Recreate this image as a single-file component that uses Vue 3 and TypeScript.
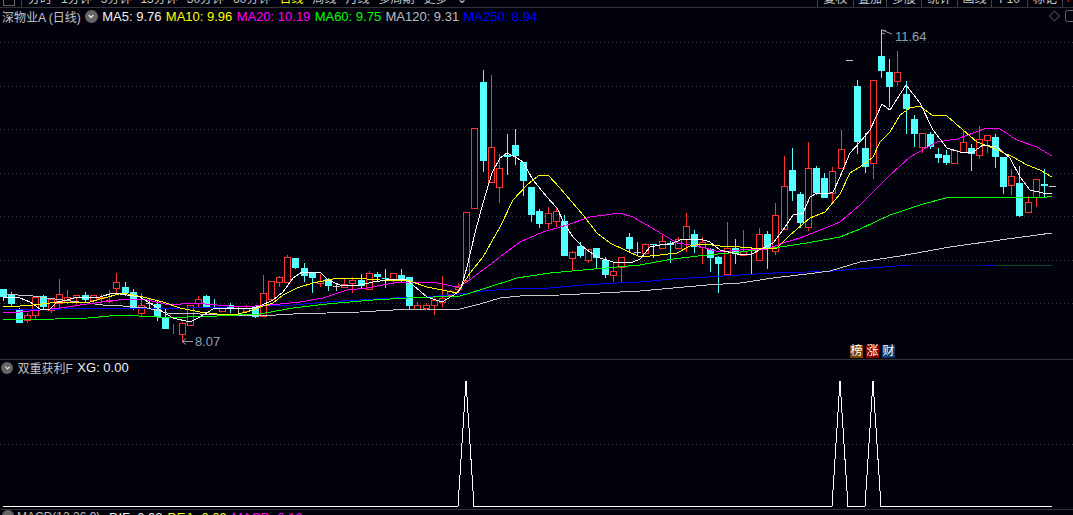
<script setup lang="ts">
type Kind = 'r' | 'c' | 'w'
type Raw = [number, number, number, number, number, Kind]

// x, high, body top, body bottom, low, kind
const raw: Raw[] = [
  [3, 289, 289, 297, 301, 'c'], [11, 292, 294, 304, 307, 'c'], [19, 308, 309, 323, 323, 'c'], [27, 313, 315, 320, 323, 'r'],
  [35, 297, 297, 315, 319, 'r'], [43, 295, 296, 307, 309, 'c'], [51, 299, 299, 310, 313, 'r'], [59, 279, 294, 303, 308, 'r'],
  [67, 290, 297, 302, 304, 'r'], [76, 295, 295, 297, 305, 'r'], [85, 292, 295, 300, 303, 'c'], [93, 295, 295, 300, 303, 'r'],
  [101, 294, 297, 298, 302, 'r'], [109, 290, 300, 301, 303, 'r'], [116, 273, 282, 288, 294, 'r'], [125, 282, 287, 293, 296, 'c'],
  [133, 289, 292, 308, 310, 'c'], [141, 293, 305, 313, 316, 'r'], [149, 299, 303, 303, 307, 'w'], [157, 300, 304, 317, 321, 'c'],
  [165, 309, 317, 329, 329, 'c'], [173, 324, 329, 329, 334, 'r'], [182, 322, 323, 334, 342, 'r'], [190, 305, 305, 325, 325, 'r'],
  [198, 296, 299, 303, 307, 'r'], [206, 295, 296, 307, 307, 'c'], [214, 299, 307, 308, 309, 'c'], [222, 307, 308, 311, 312, 'r'],
  [230, 303, 305, 309, 313, 'c'], [238, 306, 308, 308, 315, 'w'], [246, 305, 308, 311, 312, 'r'], [255, 306, 307, 317, 318, 'c'],
  [263, 275, 293, 316, 316, 'r'], [271, 281, 281, 299, 299, 'r'], [279, 276, 277, 282, 287, 'r'], [287, 255, 257, 282, 282, 'r'],
  [295, 258, 258, 268, 269, 'c'], [304, 263, 268, 276, 282, 'c'], [312, 272, 273, 278, 293, 'c'], [320, 274, 281, 283, 287, 'r'],
  [328, 278, 279, 286, 291, 'c'], [336, 283, 286, 286, 290, 'w'], [344, 279, 284, 287, 288, 'r'], [352, 277, 280, 283, 293, 'r'],
  [361, 274, 280, 286, 289, 'c'], [369, 271, 273, 289, 289, 'r'], [377, 272, 274, 277, 282, 'c'], [385, 269, 278, 279, 288, 'c'],
  [393, 273, 273, 279, 284, 'r'], [401, 269, 275, 279, 283, 'c'], [409, 277, 277, 306, 309, 'c'], [417, 302, 305, 309, 310, 'r'],
  [426, 303, 305, 308, 309, 'r'], [434, 296, 300, 305, 315, 'r'], [442, 276, 298, 302, 307, 'r'], [450, 290, 291, 295, 295, 'r'],
  [458, 283, 287, 289, 293, 'r'], [466, 212, 212, 280, 283, 'r'], [474, 128, 128, 208, 208, 'r'], [483, 70, 82, 161, 172, 'c'],
  [491, 75, 147, 182, 182, 'r'], [499, 154, 168, 187, 203, 'r'], [507, 134, 155, 157, 175, 'c'], [515, 129, 145, 156, 165, 'c'],
  [523, 162, 162, 181, 196, 'c'], [531, 187, 187, 215, 222, 'c'], [539, 209, 211, 224, 228, 'c'], [548, 207, 213, 223, 229, 'r'],
  [556, 207, 211, 221, 227, 'r'], [564, 215, 221, 256, 256, 'c'], [572, 251, 252, 258, 270, 'r'], [580, 242, 246, 256, 258, 'c'],
  [588, 249, 249, 260, 263, 'r'], [596, 248, 248, 258, 268, 'c'], [605, 257, 260, 275, 278, 'c'], [613, 262, 271, 275, 282, 'r'],
  [621, 257, 257, 267, 282, 'r'], [629, 233, 237, 249, 253, 'c'], [637, 242, 252, 252, 254, 'w'], [645, 243, 244, 253, 255, 'r'],
  [653, 244, 244, 245, 258, 'c'], [662, 234, 241, 248, 249, 'r'], [670, 241, 243, 245, 263, 'c'], [678, 237, 239, 248, 248, 'r'],
  [686, 213, 226, 239, 252, 'r'], [694, 230, 234, 247, 253, 'c'], [702, 237, 242, 247, 264, 'r'], [710, 248, 249, 258, 272, 'c'],
  [718, 256, 257, 264, 293, 'c'], [727, 222, 248, 274, 274, 'r'], [735, 239, 248, 254, 264, 'c'], [743, 230, 251, 255, 256, 'r'],
  [751, 248, 249, 250, 274, 'c'], [759, 228, 234, 260, 260, 'r'], [767, 231, 234, 249, 269, 'c'], [775, 203, 215, 251, 255, 'r'],
  [784, 156, 186, 229, 229, 'r'], [792, 148, 170, 191, 201, 'c'], [800, 192, 194, 223, 228, 'c'], [808, 142, 168, 227, 231, 'r'],
  [816, 166, 168, 193, 195, 'c'], [824, 173, 178, 198, 198, 'c'], [832, 167, 171, 193, 202, 'r'], [841, 130, 149, 168, 168, 'r'],
  [849, 60, 60, 60, 60, 'w'], [857, 80, 86, 142, 154, 'c'], [865, 133, 148, 167, 173, 'c'], [873, 80, 80, 163, 179, 'r'],
  [881, 30, 56, 71, 78, 'c'], [889, 59, 72, 87, 107, 'c'], [897, 51, 72, 81, 86, 'r'], [906, 81, 94, 109, 134, 'c'],
  [914, 115, 119, 134, 147, 'c'], [922, 133, 133, 147, 153, 'r'], [930, 132, 134, 147, 149, 'c'], [938, 148, 154, 158, 163, 'c'],
  [946, 150, 155, 163, 165, 'c'], [954, 150, 150, 163, 164, 'r'], [963, 130, 142, 152, 152, 'r'], [971, 144, 148, 154, 171, 'c'],
  [979, 126, 139, 155, 159, 'r'], [987, 135, 135, 140, 153, 'r'], [995, 134, 137, 157, 168, 'c'], [1003, 157, 157, 187, 194, 'c'],
  [1011, 169, 176, 185, 195, 'r'], [1019, 166, 183, 216, 217, 'c'], [1028, 196, 202, 212, 212, 'r'], [1036, 179, 179, 197, 207, 'r'],
  [1044, 169, 184, 186, 197, 'c'], [1052, 186, 186, 186, 186, 'w']
]

const candles = raw.map(([x, high, top, bottom, low, kind]) => ({ x, high, top, bottom, low, kind }))

const toPoints = (p: number[][]): string => p.map((q) => q.join(',')).join(' ')

const maLines = [
  { color: '#0000ff', pts: [[3, 310], [63, 309], [190, 308], [260, 306], [293, 305], [327, 302], [360, 300], [393, 298], [427, 297], [470, 293], [483, 291], [510, 289], [550, 288], [583, 285], [617, 283], [640, 282], [673, 279], [707, 277], [740, 275], [773, 273], [807, 272], [833, 271], [870, 268], [910, 265]] },
  { color: '#0a0a66', pts: [[910, 265], [985, 265]] },
  { color: '#0000ff', pts: [[985, 265], [996, 265]] },
  { color: '#0b4a2a', pts: [[996, 265], [1052, 265]] },
  { color: '#c8c8c8', pts: [[3, 294], [33, 296], [47, 298], [103, 305], [123, 306], [147, 308], [167, 313], [178, 313], [200, 314], [260, 316], [293, 314], [327, 313], [360, 312], [393, 310], [427, 309], [460, 309], [480, 304], [500, 298], [520, 296], [560, 295], [600, 293], [640, 291], [673, 288], [707, 285], [740, 283], [773, 278], [807, 274], [830, 271], [860, 262], [900, 256], [950, 247], [1000, 240], [1052, 233]] },
  { color: '#00ff00', pts: [[3, 320], [55, 319], [88, 318], [120, 315], [157, 317], [187, 317], [217, 316], [260, 314], [293, 308], [327, 304], [373, 300], [407, 298], [460, 296], [470, 293], [483, 289], [517, 278], [550, 273], [583, 270], [617, 267], [640, 265], [673, 259], [707, 255], [740, 252], [773, 248], [807, 243], [840, 237], [860, 229], [890, 215], [923, 204], [950, 197], [967, 197], [1047, 197], [1052, 196]] },
  { color: '#ff00ff', pts: [[3, 313], [20, 312], [40, 310], [60, 308], [87, 304], [110, 301], [127, 299], [147, 300], [170, 305], [193, 303], [217, 305], [240, 307], [270, 305], [300, 302], [323, 298], [347, 290], [367, 288], [393, 283], [420, 282], [437, 283], [457, 287], [467, 282], [483, 270], [500, 257], [520, 242], [543, 232], [567, 225], [590, 217], [620, 213], [633, 217], [657, 231], [677, 243], [697, 246], [720, 252], [740, 250], [767, 249], [783, 243], [800, 238], [823, 229], [840, 222], [860, 205], [873, 192], [890, 175], [910, 157], [937, 142], [957, 139], [987, 128], [1000, 129], [1017, 140], [1037, 147], [1052, 156]] },
  { color: '#ffff00', pts: [[3, 306], [20, 306], [33, 305], [50, 303], [67, 302], [87, 303], [100, 299], [123, 293], [143, 297], [163, 302], [180, 308], [200, 312], [217, 314], [233, 315], [247, 312], [260, 307], [273, 303], [283, 295], [297, 288], [313, 283], [333, 279], [350, 278], [367, 279], [393, 281], [407, 280], [427, 287], [442, 290], [457, 293], [461, 287], [470, 273], [483, 257], [500, 227], [513, 200], [527, 185], [538, 176], [548, 175], [560, 188], [583, 215], [597, 233], [610, 243], [627, 251], [640, 257], [660, 255], [677, 253], [690, 246], [703, 244], [720, 246], [740, 247], [763, 249], [777, 248], [790, 235], [810, 218], [825, 212], [840, 194], [850, 173], [863, 165], [873, 157], [880, 142], [890, 132], [900, 115], [910, 108], [920, 106], [932, 115], [947, 116], [963, 130], [977, 142], [993, 148], [1013, 157], [1027, 165], [1040, 170], [1052, 177]] },
  { color: '#ffffff', pts: [[3, 298], [12, 297], [20, 298], [30, 302], [40, 309], [50, 309], [57, 302], [67, 300], [77, 297], [100, 297], [113, 293], [127, 295], [140, 297], [153, 305], [163, 312], [173, 318], [190, 322], [200, 317], [213, 309], [233, 308], [253, 308], [260, 306], [273, 300], [283, 292], [293, 278], [302, 272], [320, 272], [328, 280], [340, 285], [360, 285], [373, 282], [393, 279], [407, 280], [427, 297], [442, 302], [457, 293], [461, 288], [467, 267], [475, 233], [483, 203], [492, 173], [500, 158], [507, 153], [517, 158], [523, 162], [533, 180], [547, 197], [557, 208], [565, 225], [573, 237], [583, 247], [597, 257], [613, 262], [633, 262], [640, 259], [650, 247], [660, 245], [670, 244], [683, 239], [700, 239], [710, 242], [720, 250], [737, 254], [750, 255], [763, 248], [773, 243], [783, 230], [793, 215], [803, 213], [810, 197], [817, 193], [830, 193], [833, 192], [840, 177], [850, 153], [860, 142], [870, 130], [882, 104], [890, 110], [906, 85], [920, 103], [933, 130], [947, 148], [960, 152], [973, 152], [983, 145], [997, 147], [1010, 158], [1020, 177], [1030, 190], [1043, 193], [1052, 194]] }
].map((l) => ({ color: l.color, points: toPoints(l.pts) }))

const gridY = [42, 86, 129, 173, 216, 260, 303]

const spikes = [466, 840, 873]
const signal = ((): string => {
  const p: number[][] = [[3, 506]]
  for (const s of spikes) p.push([s - 8, 506], [s, 381], [s + 8, 506])
  p.push([1052, 506])
  return toPoints(p)
})()

const leftTabs = ['分时', '1分钟', '5分钟', '15分钟', '30分钟', '60分钟', '日线', '周线', '月线', '多周期', '更多']
const rightTabs = [
  { label: '复权', w: 36 }, { label: '叠加', w: 33 }, { label: '多股', w: 35 }, { label: '统计', w: 36 },
  { label: '画线', w: 34 }, { label: 'F10', w: 36 }, { label: '标记', w: 35 }, { label: '+', w: 11 }
]
const legend = [
  { t: 'MA5: 9.76', c: 'white' }, { t: 'MA10: 9.96', c: 'yellow' }, { t: 'MA20: 10.19', c: 'magenta' },
  { t: 'MA60: 9.75', c: 'green' }, { t: 'MA120: 9.31', c: 'grey' }, { t: 'MA250: 8.94', c: 'blue' }
]
const badges = [
  { t: '榜', c: 'brown' }, { t: '涨', c: 'crimson' }, { t: '财', c: 'navy' }
]
const macd = [
  { t: 'DIF: 0.03', c: 'white' }, { t: 'DEA: 0.09', c: 'yellow' }, { t: 'MACD: 0.16', c: 'magenta' }
]
</script>

<template>
  <div class="screen">
    <header class="toolbar">
      <span class="menu-box"></span>
      <nav class="tabs">
        <span v-for="t in leftTabs" :key="t" class="tab" :class="{ active: t === '日线' }">{{ t }}</span>
        <span class="tab">⌄</span>
      </nav>
      <nav class="tools">
        <span v-for="t in rightTabs" :key="t.label" class="tool" :class="{ plus: t.label === '+' }" :style="{ width: t.w + 'px' }">{{ t.label }}</span>
      </nav>
    </header>

    <section class="legend">
      <span class="title">深物业A (日线)</span>
      <span class="round-btn"><svg viewBox="0 0 12 12" width="12" height="12"><path d="M3.5 5 L6 7.5 L8.5 5" fill="none" stroke="#ddd" stroke-width="1.4" /></svg></span>
      <span v-for="l in legend" :key="l.t" class="ma" :class="l.c">{{ l.t }}</span>
      <span class="spacer"></span>
      <svg class="corner" viewBox="0 0 24 12" width="24" height="12">
        <path d="M4.5 1 L9.5 6 L4.5 11 L-0.5 6 Z" transform="translate(1 0)" fill="none" stroke="#666" />
        <rect x="16.5" y="0.5" width="14" height="11" rx="2" fill="none" stroke="#666" />
      </svg>
    </section>

    <section class="main-pane">
      <svg class="chart" viewBox="0 26 1073 333" width="1073" height="333">
        <line v-for="y in gridY" :key="y" x1="0" x2="1073" :y1="y + 0.5" :y2="y + 0.5" class="grid" />
        <g v-for="k in candles" :key="k.x" shape-rendering="crispEdges">
          <template v-if="k.kind === 'w'">
            <line :x1="k.x + 0.5" :x2="k.x + 0.5" :y1="k.high" :y2="k.low + 1" class="wick-w" />
            <line :x1="k.x - 3" :x2="k.x + 4" :y1="k.top + 0.5" :y2="k.top + 0.5" class="wick-w" />
          </template>
          <template v-else>
            <line :x1="k.x + 0.5" :x2="k.x + 0.5" :y1="k.high" :y2="k.top" :class="k.kind === 'r' ? 'wick-r' : 'wick-c'" />
            <line :x1="k.x + 0.5" :x2="k.x + 0.5" :y1="k.bottom" :y2="k.low" :class="k.kind === 'r' ? 'wick-r' : 'wick-c'" />
            <rect v-if="k.kind === 'c'" :x="k.x - 3" :y="k.top" width="7" :height="k.bottom - k.top" class="body-c" />
            <rect v-else :x="k.x - 2.5" :y="k.top + 0.5" width="6" :height="k.bottom - k.top" class="body-r" />
          </template>
        </g>
        <polyline v-for="(m, i) in maLines" :key="i" :points="m.points" fill="none" :stroke="m.color" stroke-width="1" shape-rendering="crispEdges" />
        <g class="note">
          <path d="M881.5 30 L892 34 M881.5 30 L886 30.5 M881.5 33 L885 34" fill="none" stroke="#99a" />
          <text x="895" y="41">11.64</text>
          <path d="M182 341.5 L193 341.5 M182 341.5 L186 338.5 M182 341.5 L186 344.5" fill="none" stroke="#99a" />
          <text x="195" y="346">8.07</text>
        </g>
      </svg>
      <div class="badges">
        <span v-for="b in badges" :key="b.t" class="badge" :class="b.c">{{ b.t }}</span>
      </div>
    </section>

    <section class="sub-legend">
      <span class="round-btn small"><svg viewBox="0 0 12 12" width="11" height="11"><path d="M3.5 5 L6 7.5 L8.5 5" fill="none" stroke="#ddd" stroke-width="1.4" /></svg></span>
      <span class="title">双重获利F</span>
      <span class="ma white">XG: 0.00</span>
    </section>

    <section class="sub-pane">
      <svg class="chart" viewBox="0 377 1073 132" width="1073" height="132">
        <line x1="0" x2="1073" y1="444.5" y2="444.5" class="grid" />
        <polyline :points="signal" fill="none" stroke="#fff" stroke-width="1" shape-rendering="crispEdges" />
      </svg>
    </section>

    <section class="macd">
      <span class="round-btn small"></span>
      <span class="ma grey macd-name">MACD(12,26,9)</span>
      <span v-for="m in macd" :key="m.t" class="ma" :class="m.c">{{ m.t }}</span>
    </section>
  </div>
</template>

<style scoped>
.screen {
  width: 1073px;
  height: 515px;
  display: flex;
  flex-direction: column;
  overflow: hidden;
  background: #02020c;
  color: #ccc;
  font-family: "Liberation Sans", "Noto Sans CJK SC", sans-serif;
  font-size: 13px;
}
.toolbar {
  height: 7px;
  flex: none;
  box-sizing: content-box;
  display: flex;
  align-items: flex-end;
  overflow: hidden;
  border-bottom: 1px solid #333;
}
.menu-box {
  width: 12px;
  height: 6px;
  margin: 0 6px 1px 3px;
  border: 1px solid #666;
  border-top: none;
  box-sizing: border-box;
  flex: none;
}
.tabs {
  display: flex;
  align-items: flex-end;
  gap: 9px;
  height: 7px;
  padding-left: 6px;
  border-left: 1px solid #444;
  flex: none;
}
.tab,
.tool {
  font-size: 12px;
  line-height: 16px;
  height: 16px;
  flex: none;
  white-space: nowrap;
  color: #c8c8c8;
}
.tab.active {
  color: #ffff00;
}
.tools {
  display: flex;
  align-items: flex-end;
  margin-left: auto;
  height: 7px;
}
.tool {
  text-align: center;
  box-sizing: border-box;
  border-left: 1px solid #444;
}
.tool.plus {
  color: #ff3232;
}
.legend {
  height: 16px;
  padding: 0 0 2px 2px;
  flex: none;
  display: flex;
  align-items: center;
  gap: 4.3px;
  white-space: nowrap;
}
.title {
  color: #c4c4c4;
  font-size: 12px;
}
.round-btn {
  width: 13px;
  height: 13px;
  border-radius: 50%;
  background: #666;
  display: inline-flex;
  align-items: center;
  justify-content: center;
  flex: none;
}
.round-btn.small {
  width: 12px;
  height: 12px;
}
.ma.white { color: #f0f0f0; }
.ma.yellow { color: #ffff00; }
.ma.magenta { color: #ff00ff; }
.ma.green { color: #00ff00; }
.ma.grey { color: #bdbdbd; }
.ma.blue { color: #0000ff; }
.spacer { flex: 1; }
.corner {
  flex: none;
}
.main-pane {
  height: 333px;
  flex: none;
  position: relative;
  border-bottom: 1px solid #333;
}
.chart {
  display: block;
}
.grid {
  stroke: #3a3a3a;
  stroke-dasharray: 1 3;
}
.wick-c { stroke: #54ffff; }
.wick-r { stroke: #ff3232; }
.wick-w { stroke: #c8c8c8; }
.body-c { fill: #54ffff; }
.body-r { fill: #02020c; stroke: #ff3232; }
.note text {
  fill: #8fa0b3;
  font-family: "Liberation Sans", sans-serif;
  font-size: 13px;
}
.badges {
  position: absolute;
  left: 850px;
  top: 319px;
  display: flex;
  gap: 3px;
}
.badge {
  width: 13px;
  height: 13px;
  font-size: 12px;
  line-height: 13px;
  text-align: center;
  color: #fff;
}
.badge.brown { background: #7f4000; }
.badge.crimson { background: #8b0000; }
.badge.navy { background: #0a3a70; }
.sub-legend {
  height: 15px;
  padding: 0 0 2px 1px;
  flex: none;
  display: flex;
  align-items: center;
  gap: 4.5px;
  white-space: nowrap;
}
.sub-pane {
  height: 132px;
  flex: none;
  border-bottom: 1px solid #333;
}
.macd {
  height: 5px;
  flex: none;
  display: flex;
  align-items: flex-start;
  padding-left: 2px;
  gap: 5px;
  overflow: hidden;
  white-space: nowrap;
}
.macd .ma {
  line-height: 15px;
}
.macd .macd-name {
  font-size: 12px;
  width: 87px;
  margin-left: -2px;
}
</style>

<style>
html,
body {
  margin: 0;
  background: #02020c;
  overflow: hidden;
}
</style>
